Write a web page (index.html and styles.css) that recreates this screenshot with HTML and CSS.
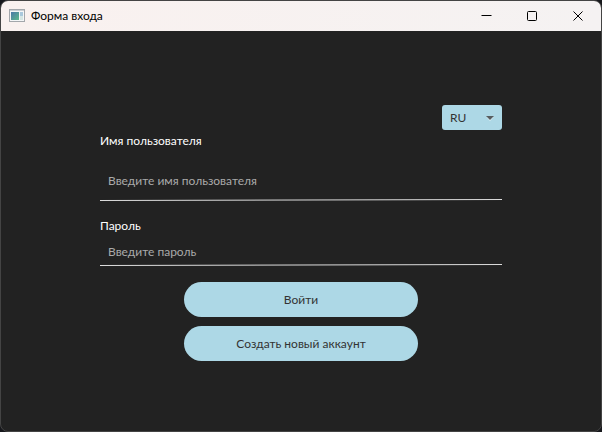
FILE: index.html
```html
<!DOCTYPE html>
<html lang="ru">
<head>
<meta charset="utf-8">
<meta name="viewport" content="width=device-width, initial-scale=1">
<title>Форма входа</title>
<link rel="stylesheet" href="styles.css">
</head>
<body>
<div class="window">
  <header class="titlebar">
    <svg class="app-icon" width="16" height="14" viewBox="0 0 16 14" aria-hidden="true">
      <defs>
        <linearGradient id="pane" x1="0" y1="0" x2="1" y2="1">
          <stop offset="0" stop-color="#4a78a8"/>
          <stop offset="1" stop-color="#5cb88a"/>
        </linearGradient>
      </defs>
      <rect x="0.5" y="0.5" width="15" height="12" fill="#f4f6f7" stroke="#a3a7ab"/>
      <rect x="1" y="1" width="14" height="1" fill="#c9ced3"/>
      <rect x="2" y="3" width="8" height="8" fill="url(#pane)"/>
      <rect x="11" y="3" width="3" height="4" fill="#a9c8dc"/>
      <rect x="11" y="7" width="3" height="4" fill="#d5e6e4"/>
    </svg>
    <h1 class="title">Форма входа</h1>
    <button class="caption-button" type="button" aria-label="Свернуть">
      <svg width="11" height="11" viewBox="0 0 11 11"><path d="M0.5 4.5h10"/></svg>
    </button>
    <button class="caption-button" type="button" aria-label="Развернуть">
      <svg width="11" height="11" viewBox="0 0 11 11"><rect x="0.5" y="0.5" width="9" height="9" rx="1"/></svg>
    </button>
    <button class="caption-button" type="button" aria-label="Закрыть">
      <svg width="11" height="11" viewBox="0 0 11 11"><path d="M0.5 0.5l9 9M9.5 0.5l-9 9"/></svg>
    </button>
  </header>
  <main class="content">
    <form class="login">
      <div class="language">
        <select class="language-select" aria-label="Язык">
          <option selected>RU</option>
          <option>EN</option>
        </select>
        <svg class="language-arrow" width="8" height="5" viewBox="0 0 8 5" aria-hidden="true">
          <path d="M0.5 1h7L4 5z" fill="#e8f5f8"/>
          <path d="M0 0h8L4 4z" fill="#565d60"/>
        </svg>
      </div>
      <label class="label" for="user">Имя пользователя</label>
      <input class="input input-tall" id="user" type="text" placeholder="Введите имя пользователя">
      <svg class="rule" viewBox="0 0 402 3" preserveAspectRatio="none" aria-hidden="true"><path d="M0 2.5L402 1.5"/></svg>
      <label class="label" for="password">Пароль</label>
      <input class="input" id="password" type="password" placeholder="Введите пароль">
      <svg class="rule" viewBox="0 0 402 3" preserveAspectRatio="none" aria-hidden="true"><path d="M0 2.5L402 1.5"/></svg>
      <div class="actions">
        <button class="action" type="submit">Войти</button>
        <button class="action" type="button">Создать новый аккаунт</button>
      </div>
    </form>
  </main>
</div>
</body>
</html>
```
FILE: styles.css
```css
* {
  box-sizing: border-box;
}

body {
  margin: 0;
  background: #17181c;
  color: #fff;
  font: 12px/18px Lato, "Open Sans", sans-serif;
}

button,
input,
select {
  font: inherit;
}

.window {
  display: flex;
  flex-direction: column;
  min-height: 100vh;
  overflow: hidden;
  border: 1px solid #444;
  border-radius: 8px;
  background: #222;
}

.titlebar {
  display: flex;
  align-items: center;
  height: 30px;
  padding-left: 8px;
  background: linear-gradient(90deg, #f9f1ef, #f5f2f2);
  color: #000;
}

.title {
  flex: 1;
  margin: 0 0 0 6px;
  font-size: 12px;
  font-weight: 400;
}

.caption-button {
  display: flex;
  align-items: center;
  justify-content: center;
  width: 46px;
  height: 30px;
  padding: 0;
  border: 0;
  background: none;
}

.caption-button svg {
  fill: none;
  stroke: #000;
}

.content {
  display: flex;
  justify-content: center;
  padding: 74px 0 24px;
}

.login {
  display: flex;
  flex-direction: column;
  width: 67%;
}

.language {
  position: relative;
  align-self: flex-end;
  width: 60px;
  height: 25px;
}

.language-select {
  width: 100%;
  height: 100%;
  padding: 0 8px;
  appearance: none;
  border: 0;
  border-radius: 3px;
  background: #add8e6;
  color: #333;
}

.language-arrow {
  position: absolute;
  top: 11px;
  right: 8px;
  pointer-events: none;
}

.label {
  margin-top: 2px;
}

.input {
  width: 100%;
  height: 24px;
  margin-top: 4px;
  padding: 0 8px;
  border: 0;
  outline: 0;
  background: none;
  color: #fff;
}

.input-tall {
  height: 36px;
  margin-top: 12px;
}

.rule {
  width: 100%;
  height: 3px;
  fill: none;
  stroke: #ddd;
}

.input::placeholder {
  color: #aaa;
  opacity: 1;
}

.rule + .label {
  margin-top: 16px;
}

.actions {
  display: flex;
  flex-direction: column;
  align-items: center;
  gap: 9px;
  margin-top: 16px;
}

.action {
  width: 58%;
  height: 35px;
  padding: 0 16px;
  border: 0;
  border-radius: 18px;
  background: #add8e6;
  color: #333;
}
```
